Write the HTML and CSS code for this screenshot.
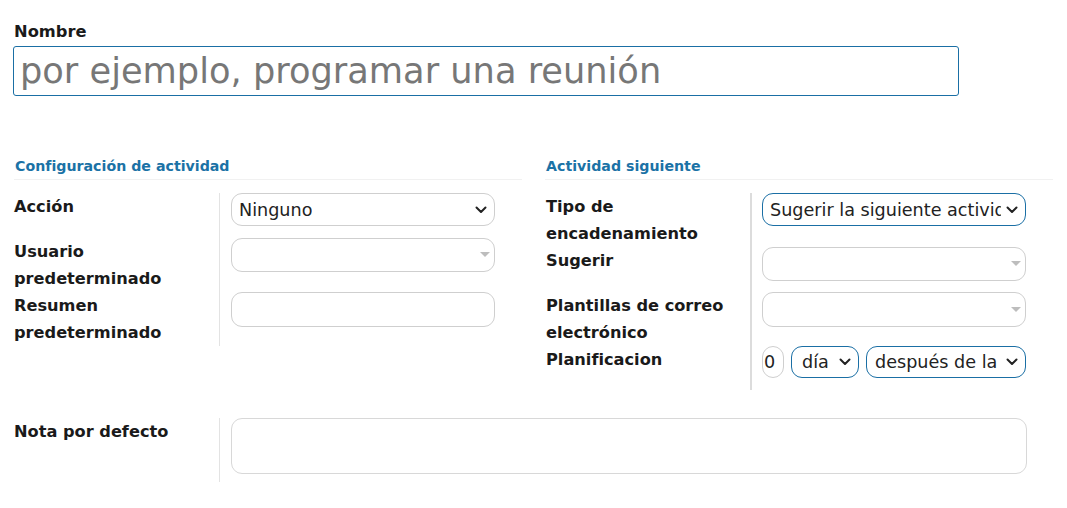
FILE: index.html
```html
<!DOCTYPE html>
<html lang="es">
<head>
<meta charset="utf-8">
<title>Actividad</title>
<link rel="stylesheet" href="styles.css">
</head>
<body>
<div class="page">
  <div class="name-label">Nombre</div>
  <div class="name-input"><span class="placeholder">por ejemplo, programar una reunión</span></div>

  <div class="groups">
    <section class="group">
      <h3 class="group-title">Configuración de actividad</h3>
      <div class="fields">
        <div class="lbl">Acción</div>
        <div class="cell">
          <div class="sel h33"><span class="sel-text">Ninguno</span>
            <svg class="chev" width="12" height="8" viewBox="0 0 12 8"><path d="M1.5 1.5 L6 6 L10.5 1.5" fill="none" stroke="#222" stroke-width="2" stroke-linecap="round" stroke-linejoin="round"/></svg>
          </div>
        </div>
        <div class="lbl">Usuario predeterminado</div>
        <div class="cell">
          <div class="sel2 h34"><svg class="caret" width="10" height="6" viewBox="0 0 10 6"><path d="M0 0 H10 L5 5 Z" fill="#bdbdbd"/></svg></div>
        </div>
        <div class="lbl">Resumen predeterminado</div>
        <div class="cell">
          <div class="txt h35"></div>
        </div>
      </div>
    </section>

    <section class="group">
      <h3 class="group-title">Actividad siguiente</h3>
      <div class="fields right">
        <div class="lbl">Tipo de encadenamiento</div>
        <div class="cell">
          <div class="sel blue h33"><span class="sel-text">Sugerir la siguiente actividad</span>
            <svg class="chev" width="12" height="8" viewBox="0 0 12 8"><path d="M1.5 1.5 L6 6 L10.5 1.5" fill="none" stroke="#222" stroke-width="2" stroke-linecap="round" stroke-linejoin="round"/></svg>
          </div>
        </div>
        <div class="lbl">Sugerir</div>
        <div class="cell tight">
          <div class="sel2 h34"><svg class="caret" width="10" height="6" viewBox="0 0 10 6"><path d="M0 0 H10 L5 5 Z" fill="#bdbdbd"/></svg></div>
        </div>
        <div class="lbl">Plantillas de correo electrónico</div>
        <div class="cell">
          <div class="sel2 h35"><svg class="caret" width="10" height="6" viewBox="0 0 10 6"><path d="M0 0 H10 L5 5 Z" fill="#bdbdbd"/></svg></div>
        </div>
        <div class="lbl">Planificacion</div>
        <div class="cell">
          <div class="plan">
            <div class="num">0</div>
            <div class="sel blue small day"><span class="sel-text">día</span>
              <svg class="chev" width="12" height="8" viewBox="0 0 12 8"><path d="M1.5 1.5 L6 6 L10.5 1.5" fill="none" stroke="#222" stroke-width="2" stroke-linecap="round" stroke-linejoin="round"/></svg>
            </div>
            <div class="sel blue small after"><span class="sel-text">después de la</span>
              <svg class="chev" width="12" height="8" viewBox="0 0 12 8"><path d="M1.5 1.5 L6 6 L10.5 1.5" fill="none" stroke="#222" stroke-width="2" stroke-linecap="round" stroke-linejoin="round"/></svg>
            </div>
          </div>
        </div>
      </div>
    </section>
  </div>

  <div class="note">
    <div class="lbl">Nota por defecto</div>
    <div class="cell note-cell">
      <div class="textarea"></div>
    </div>
  </div>
</div>
</body>
</html>
```

FILE: styles.css
```css
* { box-sizing: border-box; }
html, body { margin: 0; padding: 0; background: #fff; }
body {
  font-family: "DejaVu Sans", "Liberation Sans", sans-serif;
  color: #1e1e1e;
}
.page {
  padding: 21px 0 0 14px;
  width: 1067px;
}
.name-label {
  font-size: 16.3px;
  font-weight: 700;
  line-height: 22px;
  height: 25px;
  color: #1a1a1a;
}
.name-input {
  margin-left: -1px;
  width: 946px;
  height: 50px;
  border: 1px solid #1a6fa5;
  border-radius: 3px;
  display: flex;
  align-items: center;
  padding-left: 6px;
}
.placeholder {
  font-size: 35.2px;
  color: #777;
  line-height: 44px;
  white-space: nowrap;
}
.groups {
  margin-top: 60px;
  display: grid;
  grid-template-columns: 508px 508px;
  column-gap: 23px;
}
.group-title {
  margin: 0;
  font-size: 14.2px;
  font-weight: 700;
  color: #1b72a6;
  line-height: 20px;
  padding: 0 0 3px 1px;
  border-bottom: 1px solid #f1f1f1;
}
.fields {
  margin-top: 13px;
  display: grid;
  grid-template-columns: 205px 1fr;
}
.lbl {
  font-size: 16.2px;
  font-weight: 700;
  line-height: 27px;
  padding-right: 8px;
  color: #1a1a1a;
}
.fields.right .lbl { padding-left: 1px; }
.cell {
  border-left: 1px solid #e3e3e3;
  padding: 0 27px 12px 11px;
}
.fields.right .cell {
  border-left: 2px solid #dcdcdc;
  padding: 0 25px 12px 10px;
}
.fields.right .cell.tight { padding-bottom: 11px; }
.sel, .sel2, .txt, .textarea {
  width: 264px;
  border: 1px solid #cfcfcf;
  border-radius: 11px;
  position: relative;
  background: #fff;
}
.h33 { height: 33px; }
.h34 { height: 34px; }
.h35 { height: 35px; }
.sel {
  display: flex;
  align-items: center;
  padding: 0 24px 0 7px;
  overflow: hidden;
}
.sel.blue { border-color: #1a6fa5; }
.sel-text {
  font-size: 17.6px;
  color: #222;
  white-space: nowrap;
  overflow: hidden;
}
.chev {
  position: absolute;
  right: 7px;
  top: 50%;
  margin-top: -4px;
}
.caret {
  position: absolute;
  right: 4px;
  top: 50%;
  margin-top: -3px;
}
.plan {
  display: flex;
  gap: 7px;
  width: 264px;
}
.num {
  width: 22px;
  height: 32px;
  border: 1px solid #cfcfcf;
  border-radius: 11px;
  font-size: 17.6px;
  display: flex;
  align-items: center;
  padding-left: 1px;
  overflow: hidden;
  color: #222;
}
.sel.small { height: 32px; }
.sel.day { width: 68px; padding-left: 10px; padding-right: 20px; }
.sel.after { width: 160px; padding-left: 8px; padding-right: 20px; }
.note {
  margin-top: 28px;
  display: grid;
  grid-template-columns: 205px 1fr;
  width: 1039px;
}
.note-cell { padding-bottom: 8px; }
.textarea {
  width: 796px;
  height: 56px;
  border-color: #d8d8d8;
}
```
